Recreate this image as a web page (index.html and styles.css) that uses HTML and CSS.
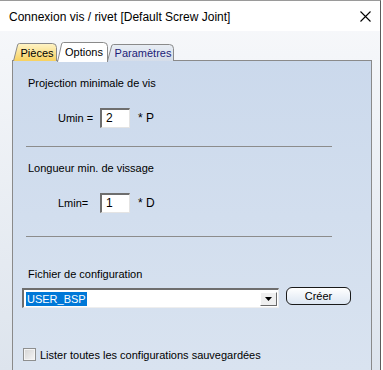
FILE: index.html
```html
<!DOCTYPE html>
<html>
<head>
<meta charset="utf-8">
<link rel="stylesheet" href="styles.css">
</head>
<body>
<div class="window">
  <div class="titlebar">
    <span class="title">Connexion vis / rivet [Default Screw Joint]</span>
    <svg class="close" width="11" height="11" viewBox="0 0 11 11"><path d="M0.5 0.5 L10.5 10.5 M10.5 0.5 L0.5 10.5" stroke="#000" stroke-width="1.1" fill="none"/></svg>
  </div>
  <div class="client">
    <div class="tabs">
      <div class="tab tab-pieces">
        <svg class="tab-bg" width="44" height="18" viewBox="0 0 44 18">
          <defs><linearGradient id="gy" x1="0" y1="0" x2="0" y2="1"><stop offset="0" stop-color="#fff4c8"/><stop offset="1" stop-color="#f7d15f"/></linearGradient></defs>
          <path d="M0.5 18 L4.6 2 Q5 0.5 6.5 0.5 L39.5 0.5 Q43.5 0.5 43.5 4.5 L43.5 18" fill="url(#gy)" stroke="#8a8a8a"/>
        </svg>
        <span class="tab-text">Pièces</span>
      </div>
      <div class="tab tab-options">
        <svg class="tab-bg" width="52" height="20" viewBox="0 0 52 20">
          <path d="M0.5 20 L4.6 2 Q5 0.5 6.5 0.5 L46.5 0.5 Q50.5 0.5 50.5 4.5 L50.5 20" fill="#ffffff" stroke="#8a8a8a"/>
        </svg>
        <span class="tab-text">Options</span>
      </div>
      <div class="tab tab-params">
        <svg class="tab-bg" width="68" height="17" viewBox="0 0 68 17">
          <defs><linearGradient id="gb" x1="0" y1="0" x2="0" y2="1"><stop offset="0" stop-color="#e8edf4"/><stop offset="1" stop-color="#d5dde9"/></linearGradient></defs>
          <path d="M0.5 17 L4.6 2 Q5 0.5 6.5 0.5 L62.5 0.5 Q66.5 0.5 66.5 4.5 L66.5 17" fill="url(#gb)" stroke="#8a8a8a"/>
        </svg>
        <span class="tab-text">Paramètres</span>
      </div>
    </div>
    <div class="panel">
      <div class="sect-label">Projection minimale de vis</div>
      <div class="param-row r1">
        <span class="param-name">Umin =</span>
        <span class="field">2</span>
        <span class="unit">* P</span>
      </div>
      <div class="sep s1"></div>
      <div class="sect-label l2">Longueur min. de vissage</div>
      <div class="param-row r2">
        <span class="param-name">Lmin=</span>
        <span class="field">1</span>
        <span class="unit">* D</span>
      </div>
      <div class="sep s2"></div>
      <div class="sect-label l3">Fichier de configuration</div>
      <div class="config-row">
        <div class="combo">
          <span class="combo-sel">USER_BSP</span>
          <span class="combo-btn"><svg width="7" height="4" viewBox="0 0 7 4"><path d="M0 0 L7 0 L3.5 4 Z" fill="#000"/></svg></span>
        </div>
        <div class="btn">Créer</div>
      </div>
      <div class="check-row">
        <span class="checkbox"></span>
        <span class="check-label">Lister toutes les configurations sauvegardées</span>
      </div>
    </div>
  </div>
</div>
</body>
</html>
```
FILE: styles.css
```css
html, body {
  margin: 0;
  padding: 0;
  background: #ffffff;
  overflow: hidden;
}
body {
  width: 383px;
  height: 370px;
  font-family: "Liberation Sans", Arial, sans-serif;
  font-size: 11px;
  color: #000;
}
.window {
  width: 381px;
  height: 370px;
  border-right: 1px solid #5c5c5c;
  border-top: 1px solid #9a9a9a;
  box-sizing: border-box;
  display: flex;
  flex-direction: column;
  background: linear-gradient(#f8f9fb, #dde4ed);
  overflow: hidden;
}
.titlebar {
  height: 30px;
  flex: none;
  background: #ffffff;
  display: flex;
  align-items: center;
  justify-content: space-between;
  padding: 0 9px 0 9px;
  box-sizing: border-box;
}
.title {
  font-size: 12px;
  color: #000;
  margin-top: 1px;
}
.close {
  display: block;
  margin-top: 1px;
}
.client {
  flex: 1;
  display: flex;
  flex-direction: column;
  padding: 12px 8px 0 12px;
  min-height: 0;
}
.tabs {
  display: flex;
  align-items: flex-end;
  height: 18px;
  padding-left: 1px;
  position: relative;
  z-index: 2;
  margin-bottom: -1px;
}
.tab {
  position: relative;
  display: flex;
  align-items: center;
  justify-content: center;
  flex: none;
}
.tab-bg {
  position: absolute;
  left: 0;
  top: 0;
  display: block;
}
.tab-text {
  position: relative;
  line-height: 13px;
}
.tab-pieces {
  width: 44px;
  height: 18px;
}
.tab-pieces .tab-text { padding-left: 4px; padding-top: 2px; }
.tab-options {
  width: 52px;
  height: 20px;
  margin-bottom: -1px;
  z-index: 3;
}
.tab-options .tab-text { padding-left: 2px; padding-top: 1px; }
.tab-params {
  width: 68px;
  height: 17px;
  margin-left: -2px;
}
.tab-params .tab-text { padding-left: 4px; padding-top: 2px; color: #1c1c78; }
.panel {
  flex: 1;
  border: 1px solid #8a8a8a;
  border-bottom: none;
  background: linear-gradient(#cbd9ec, #d9e3f0);
  padding-top: 15px;
  display: flex;
  flex-direction: column;
}
.sect-label {
  padding-left: 15px;
  line-height: 14px;
  height: 14px;
}
.l2 { margin-top: 14px; }
.l3 { margin-top: 30px; }
.param-row {
  display: flex;
  align-items: center;
  padding-left: 45px;
  margin-top: 18px;
  height: 20px;
}
.param-name {
  width: 42px;
}
.field {
  width: 30px;
  height: 20px;
  box-sizing: border-box;
  background: #fff;
  border-top: 2px solid #6e6e6e;
  border-left: 2px solid #6e6e6e;
  border-right: 1px solid #e4e4e4;
  border-bottom: 1px solid #e4e4e4;
  padding-left: 4px;
  line-height: 16px;
  font-size: 12px;
}
.unit {
  margin-left: 8px;
  font-size: 12px;
}
.sep {
  margin-left: 13px;
  width: 306px;
  height: 1px;
  background: #8c8c8c;
}
.s1 { margin-top: 18px; }
.s2 { margin-top: 23px; }
.config-row {
  display: flex;
  align-items: flex-start;
  margin-top: 7px;
  padding-left: 9px;
}
.combo {
  width: 257px;
  height: 20px;
  box-sizing: border-box;
  background: #fff;
  border-top: 2px solid #6e6e6e;
  border-left: 2px solid #6e6e6e;
  border-right: 1px solid #eeeeee;
  border-bottom: 1px solid #eeeeee;
  display: flex;
  align-items: center;
  justify-content: space-between;
  padding: 0 1px 0 2px;
}
.combo-sel {
  background: #0078d7;
  color: #fff;
  font-size: 11px;
  line-height: 14px;
  padding: 0 1px;
}
.combo-btn {
  width: 17px;
  height: 14px;
  box-sizing: border-box;
  background: #efefef;
  border-top: 1px solid #ffffff;
  border-left: 1px solid #ffffff;
  border-right: 1px solid #6a6a6a;
  border-bottom: 1px solid #6a6a6a;
  display: flex;
  align-items: center;
  justify-content: center;
}
.combo-btn svg { display: block; }
.btn {
  margin-left: 7px;
  margin-top: -1px;
  width: 65px;
  height: 18px;
  box-sizing: border-box;
  border: 1px solid #1a1a1a;
  border-radius: 6px;
  background: linear-gradient(#ffffff, #dce6f2);
  display: flex;
  align-items: center;
  justify-content: center;
  font-size: 11px;
}
.check-row {
  display: flex;
  align-items: center;
  margin-top: 40px;
  padding-left: 10px;
}
.checkbox {
  width: 13px;
  height: 13px;
  box-sizing: border-box;
  border: 1px solid #8e8f8f;
  background: linear-gradient(135deg, #d4d4d4, #f6f6f6);
  box-shadow: inset 0 0 0 1px #f4f4f4;
}
.check-label {
  margin-left: 4px;
  font-size: 11px;
}
```
